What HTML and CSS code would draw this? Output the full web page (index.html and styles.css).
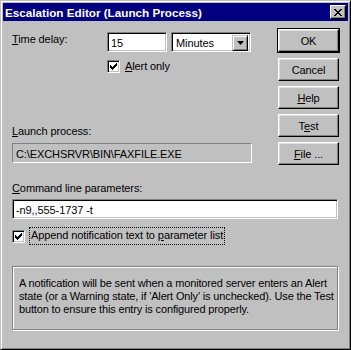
FILE: index.html
```html
<!DOCTYPE html>
<html>
<head>
  <title>Escalation Editor (Launch Process)</title>
  <meta charset="utf-8">
  <link rel="stylesheet" href="styles.css">
</head>
<body>
  <div class="window">
    <div class="titlebar">
      <span class="title">Escalation Editor (Launch Process)</span>
      <span class="close-btn">
        <svg width="8" height="7" viewBox="0 0 8 7"><path d="M0 0h2v1h1v1h2v-1h1v-1h2v1h-1v1h-1v1h-1v1h1v1h1v1h1v1h-2v-1h-1v-1h-2v1h-1v1h-2v-1h1v-1h1v-1h1v-1h-1v-1h-1v-1h-1z" fill="#000"/></svg>
      </span>
    </div>
    <div class="client">
      <div class="top">
        <div class="left">
          <div class="delay-row">
            <label class="delay-label"><u>T</u>ime delay:</label>
            <div class="edit delay-edit">15</div>
            <div class="combo">
              <span class="combo-text">Minutes</span>
              <span class="drop-btn">
                <svg width="7" height="4" viewBox="0 0 7 4"><path d="M0 0h7l-3.5 4z" fill="#000"/></svg>
              </span>
            </div>
          </div>
          <div class="check-row alert-row">
            <span class="checkbox">
              <svg width="7" height="7" viewBox="0 0 7 7"><path d="M0 2h1v1h1v1h1v-1h1v-1h1v-1h1v-1h1v3h-1v1h-1v1h-1v1h-1v1h-1v-1h-1v-1h-1z" fill="#000"/></svg>
            </span>
            <span><u>A</u>lert only</span>
          </div>
          <div class="launch-label"><u>L</u>aunch process:</div>
          <div class="edit readonly">C:\EXCHSRVR\BIN\FAXFILE.EXE</div>
        </div>
        <div class="buttons">
          <div class="btn-frame"><div class="btn">OK</div></div>
          <div class="btn">Cancel</div>
          <div class="btn"><span><u>H</u>elp</span></div>
          <div class="btn"><span>T<u>e</u>st</span></div>
          <div class="btn"><span><u>F</u>ile ...</span></div>
        </div>
      </div>
      <div class="cmd-label"><u>C</u>ommand line parameters:</div>
      <div class="edit params">-n9,,555-1737 -t</div>
      <div class="check-row append-row">
        <span class="checkbox">
          <svg width="7" height="7" viewBox="0 0 7 7"><path d="M0 2h1v1h1v1h1v-1h1v-1h1v-1h1v-1h1v3h-1v1h-1v1h-1v1h-1v1h-1v-1h-1v-1h-1z" fill="#000"/></svg>
        </span>
        <span class="focus">Append notification text to <u>p</u>arameter list</span>
      </div>
      <div class="info">
        <div class="info-line">A notification will be sent when a monitored server enters an Alert</div>
        <div class="info-line">state (or a Warning state, if 'Alert Only' is unchecked). Use the Test</div>
        <div class="info-line">button to ensure this entry is configured properly.</div>
      </div>
    </div>
  </div>
</body>
</html>
```

FILE: styles.css
```css
body {
  margin: 0;
  font-family: "Liberation Sans", Arial, sans-serif;
  font-size: 11px;
  letter-spacing: -0.1px;
  color: #000;
  background-color: #c0c0c0;
}
u {
  text-decoration: underline;
  text-underline-offset: 1px;
}
.window {
  width: 351px;
  height: 350px;
  box-sizing: border-box;
  border: 1px solid;
  border-color: #c0c0c0 #000 #000 #c0c0c0;
  box-shadow: inset 1px 1px 0 #fff, inset -1px -1px 0 #808080;
  padding: 2px;
  background-color: #c0c0c0;
}
.titlebar {
  height: 18px;
  background-color: #000080;
  color: #fff;
  display: flex;
  align-items: center;
  justify-content: space-between;
  padding: 0 2px 0 2px;
}
.title {
  font-weight: bold;
  font-size: 11.7px;
  letter-spacing: 0;
}
.close-btn {
  width: 16px;
  height: 14px;
  box-sizing: border-box;
  background-color: #c0c0c0;
  border: 1px solid;
  border-color: #fff #000 #000 #fff;
  box-shadow: inset -1px -1px 0 #808080;
  display: flex;
  align-items: center;
  justify-content: center;
  padding-right: 1px;
}
.close-btn svg {
  display: block;
}
.client {
  padding: 0 8px 0 9px;
}
.top {
  display: flex;
  justify-content: space-between;
}
.left {
  padding-top: 11px;
}
.delay-row {
  display: flex;
  align-items: flex-start;
}
.delay-label {
  width: 95px;
  line-height: 13px;
  padding-top: 1px;
}
.edit {
  box-sizing: border-box;
  background-color: #fff;
  border: 1px solid;
  border-color: #808080 #fff #fff #808080;
  box-shadow: inset 1px 1px 0 #000, inset -1px -1px 0 #c0c0c0;
  padding: 3px 3px 0 3px;
  height: 20px;
  line-height: 14px;
  white-space: nowrap;
  overflow: hidden;
}
.delay-edit {
  width: 60px;
}
.combo {
  margin-left: 4px;
  width: 80px;
  height: 20px;
  box-sizing: border-box;
  background-color: #fff;
  border: 1px solid;
  border-color: #808080 #fff #fff #808080;
  box-shadow: inset 1px 1px 0 #000, inset -1px -1px 0 #c0c0c0;
  display: flex;
  justify-content: space-between;
  padding: 2px;
}
.combo-text {
  line-height: 14px;
  padding: 1px 0 0 2px;
}
.drop-btn {
  width: 16px;
  height: 16px;
  box-sizing: border-box;
  background-color: #c0c0c0;
  border: 1px solid;
  border-color: #c0c0c0 #000 #000 #c0c0c0;
  box-shadow: inset 1px 1px 0 #fff, inset -1px -1px 0 #808080;
  display: flex;
  align-items: center;
  justify-content: center;
}
.check-row {
  display: flex;
  align-items: center;
  line-height: 13px;
}
.checkbox {
  width: 13px;
  height: 13px;
  box-sizing: border-box;
  background-color: #fff;
  border: 1px solid;
  border-color: #808080 #fff #fff #808080;
  box-shadow: inset 1px 1px 0 #000, inset -1px -1px 0 #c0c0c0;
  display: flex;
  align-items: center;
  justify-content: center;
  margin-right: 5px;
}
.alert-row {
  margin-left: 95px;
  margin-top: 8px;
}
.launch-label {
  margin-top: 52px;
  line-height: 13px;
}
.readonly {
  margin-top: 5px;
  width: 240px;
  background-color: #c0c0c0;
  box-shadow: none;
  border-color: #808080 #fff #fff #808080;
}
.buttons {
  padding-top: 7px;
  width: 63px;
  display: flex;
  flex-direction: column;
  gap: 5px;
}
.btn {
  height: 23px;
  box-sizing: border-box;
  background-color: #c0c0c0;
  border: 1px solid;
  border-color: #fff #000 #000 #fff;
  box-shadow: inset -1px -1px 0 #808080, inset 1px 1px 0 #dfdfdf;
  display: flex;
  align-items: center;
  justify-content: center;
  margin-left: 1px;
  width: 61px;
}
.btn-frame {
  border: 1px solid #000;
  width: 61px;
}
.btn-frame .btn {
  margin-left: 0;
  width: 61px;
}
.cmd-label {
  margin-top: 17px;
  line-height: 13px;
}
.params {
  margin-top: 4px;
  width: 326px;
}
.append-row {
  margin-top: 9px;
}
.focus {
  outline: 1px dotted #000;
  padding: 1px 1px 2px 1px;
}
.info {
  margin-top: 22px;
  width: 326px;
  height: 64px;
  box-sizing: border-box;
  border: 1px solid #808080;
  box-shadow: 1px 1px 0 #fff, inset 1px 1px 0 #fff;
  padding: 10px 0 0 6px;
  line-height: 13px;
  letter-spacing: -0.15px;
}
.info-line {
  white-space: nowrap;
}
```
